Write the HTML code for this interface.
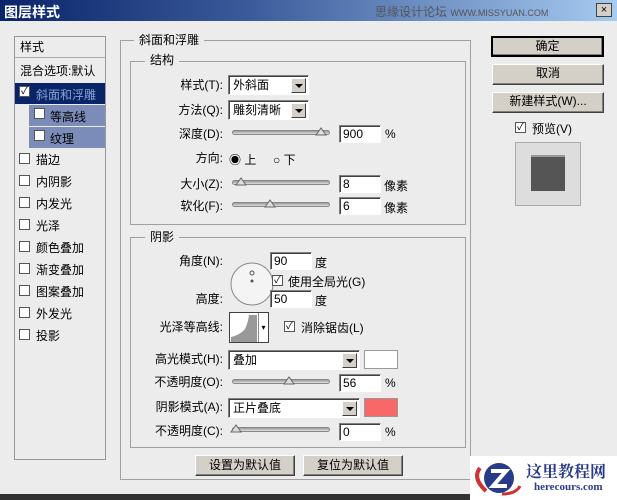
<!DOCTYPE html>
<html><head><meta charset="utf-8"><style>
*{margin:0;padding:0;box-sizing:border-box}
body{width:617px;height:500px;background:#ececec;font-family:"Liberation Sans","Noto Sans CJK SC",sans-serif;font-size:12px;color:#000;position:relative;overflow:hidden}
.a{position:absolute;white-space:nowrap}
.lbl{position:absolute;text-align:right;width:110px;line-height:14px}
.grp{position:absolute;border:1px solid #a0a0a0}
.gt{position:absolute;background:#ececec;padding:0 5px;line-height:14px}
.in{position:absolute;background:#fff;border:1px solid;border-color:#808080 #fff #fff #808080;box-shadow:inset 1px 1px 0 #404040;height:18px;line-height:16px;padding-left:3px}
.dd{position:absolute;background:#fff;border:1px solid;border-color:#808080 #fff #fff #808080;box-shadow:inset 1px 1px 0 #404040;height:20px;line-height:18px;padding-left:4px}
.dd i{position:absolute;right:2px;top:2px;width:15px;height:15px;background:#d4d0c8;border:1px solid;border-color:#fff #404040 #404040 #fff}
.dd i:after{content:"";position:absolute;left:3px;top:5px;border:4px solid transparent;border-top:4px solid #000;border-bottom:0}
.tr{position:absolute;height:5px;width:98px;background:linear-gradient(#999,#ddd);border-radius:3px;border:1px solid #888}
.th{position:absolute;width:12px;height:9px;top:-4px}
.cb{position:absolute;width:11px;height:11px;background:#fff;border:1px solid #555;font-size:10px;line-height:9px;text-align:center}
.btn{position:absolute;background:#d4d0c8;border:1px solid;border-color:#fff #404040 #404040 #fff;box-shadow:inset -1px -1px 0 #808080;text-align:center;line-height:17px}
</style></head><body>
<div class="a" style="left:0;top:0;width:617px;height:21px;background:linear-gradient(90deg,#0a246a,#3a5a9a 40%,#a6caf0);"></div>
<div class="a" style="left:4px;top:2px;color:#fff;font-weight:bold;font-size:14px">图层样式</div>
<div class="a" style="left:375px;top:3px;color:#555;font-size:12px">思缘设计论坛 <span style="font-size:9px">WWW.MISSYUAN.COM</span></div>
<div class="a" style="left:596px;top:3px;width:16px;height:14px;background:#d4d0c8;border:1px solid #404040;font-size:11px;text-align:center;line-height:12px">×</div>

<!-- left list -->
<div class="a" style="left:14px;top:36px;width:92px;height:424px;background:#ececec;border:1px solid #999"></div>
<div class="a" style="left:20px;top:38px">样式</div>
<div class="a" style="left:15px;top:57px;width:90px;border-top:1px solid #aaa"></div>
<div class="a" style="left:20px;top:62px">混合选项:默认</div>
<div class="a" style="left:15px;top:83px;width:90px;height:21px;background:#0a246a"></div>
<div class="cb" style="left:19px;top:86px">✓</div>
<div class="a" style="left:36px;top:86px;color:#8aa0d0">斜面和浮雕</div>
<div class="a" style="left:29px;top:105px;width:76px;height:21px;background:#7c8cb8"></div>
<div class="cb" style="left:34px;top:108px"></div><div class="a" style="left:50px;top:108px">等高线</div>
<div class="a" style="left:29px;top:127px;width:76px;height:21px;background:#7c8cb8"></div>
<div class="cb" style="left:34px;top:130px"></div><div class="a" style="left:50px;top:130px">纹理</div>
<div class="cb" style="left:19px;top:153px"></div><div class="a" style="left:36px;top:151px">描边</div>
<div class="cb" style="left:19px;top:175px"></div><div class="a" style="left:36px;top:173px">内阴影</div>
<div class="cb" style="left:19px;top:197px"></div><div class="a" style="left:36px;top:195px">内发光</div>
<div class="cb" style="left:19px;top:219px"></div><div class="a" style="left:36px;top:217px">光泽</div>
<div class="cb" style="left:19px;top:241px"></div><div class="a" style="left:36px;top:239px">颜色叠加</div>
<div class="cb" style="left:19px;top:263px"></div><div class="a" style="left:36px;top:261px">渐变叠加</div>
<div class="cb" style="left:19px;top:285px"></div><div class="a" style="left:36px;top:283px">图案叠加</div>
<div class="cb" style="left:19px;top:307px"></div><div class="a" style="left:36px;top:305px">外发光</div>
<div class="cb" style="left:19px;top:329px"></div><div class="a" style="left:36px;top:327px">投影</div>

<!-- groups -->
<div class="grp" style="left:120px;top:40px;width:351px;height:440px"></div>
<div class="gt" style="left:134px;top:33px">斜面和浮雕</div>
<div class="grp" style="left:130px;top:61px;width:336px;height:164px"></div>
<div class="gt" style="left:145px;top:53px">结构</div>
<div class="grp" style="left:130px;top:237px;width:336px;height:211px"></div>
<div class="gt" style="left:145px;top:230px">阴影</div>

<div class="lbl" style="left:113px;top:78px">样式(T):</div>
<div class="dd" style="left:228px;top:75px;width:81px">外斜面<i></i></div>
<div class="lbl" style="left:113px;top:103px">方法(Q):</div>
<div class="dd" style="left:228px;top:100px;width:81px">雕刻清晰<i></i></div>
<div class="lbl" style="left:113px;top:127px">深度(D):</div>
<div class="tr" style="left:232px;top:130px"><svg class="th" style="left:82px" viewBox="0 0 12 9"><path d="M1 8L6 1L11 8Z" fill="#ddd" stroke="#666"/></svg></div>
<div class="in" style="left:339px;top:125px;width:42px">900</div><div class="a" style="left:385px;top:127px">%</div>
<div class="lbl" style="left:113px;top:151px">方向:</div>
<div class="a" style="left:229px;top:151px">◉ 上 &nbsp;&nbsp;&nbsp;&nbsp;○ 下</div>
<div class="lbl" style="left:113px;top:177px">大小(Z):</div>
<div class="tr" style="left:232px;top:180px"><svg class="th" style="left:2px" viewBox="0 0 12 9"><path d="M1 8L6 1L11 8Z" fill="#ddd" stroke="#666"/></svg></div>
<div class="in" style="left:339px;top:175px;width:42px">8</div><div class="a" style="left:384px;top:177px">像素</div>
<div class="lbl" style="left:113px;top:199px">软化(F):</div>
<div class="tr" style="left:232px;top:202px"><svg class="th" style="left:31px" viewBox="0 0 12 9"><path d="M1 8L6 1L11 8Z" fill="#ddd" stroke="#666"/></svg></div>
<div class="in" style="left:339px;top:197px;width:42px">6</div><div class="a" style="left:384px;top:199px">像素</div>

<div class="lbl" style="left:113px;top:254px">角度(N):</div>
<svg class="a" style="left:230px;top:262px" width="44" height="44"><circle cx="22" cy="22" r="21" fill="#f4f4f4" stroke="#888"/><circle cx="22" cy="11" r="2" fill="none" stroke="#555"/><circle cx="22" cy="19" r="1.5" fill="#555"/></svg>
<div class="in" style="left:270px;top:252px;width:42px">90</div><div class="a" style="left:315px;top:254px">度</div>
<div class="cb" style="left:272px;top:275px">✓</div><div class="a" style="left:288px;top:273px">使用全局光(G)</div>
<div class="lbl" style="left:113px;top:292px">高度:</div>
<div class="in" style="left:270px;top:290px;width:42px">50</div><div class="a" style="left:315px;top:292px">度</div>
<div class="lbl" style="left:113px;top:320px">光泽等高线:</div>
<div class="a" style="left:229px;top:312px;width:40px;height:31px;background:#fff;border:1px solid #404040"><svg width="28" height="29" style="position:absolute;left:0;top:0"><path d="M1 29L1 24Q10 22 15 16Q18 10 19 2L27 2L27 29Z" fill="#999"/></svg><div style="position:absolute;right:0;top:0;width:10px;height:29px;border-left:1px solid #888;font-size:8px;line-height:29px;text-align:center">▾</div></div>
<div class="cb" style="left:284px;top:321px">✓</div><div class="a" style="left:301px;top:319px">消除锯齿(L)</div>
<div class="lbl" style="left:113px;top:352px">高光模式(H):</div>
<div class="dd" style="left:228px;top:350px;width:132px">叠加<i></i></div>
<div class="a" style="left:364px;top:350px;width:34px;height:19px;background:#fff;border:1px solid #999"></div>
<div class="lbl" style="left:113px;top:375px">不透明度(O):</div>
<div class="tr" style="left:232px;top:379px"><svg class="th" style="left:50px" viewBox="0 0 12 9"><path d="M1 8L6 1L11 8Z" fill="#ddd" stroke="#666"/></svg></div>
<div class="in" style="left:339px;top:374px;width:42px">56</div><div class="a" style="left:385px;top:376px">%</div>
<div class="lbl" style="left:113px;top:400px">阴影模式(A):</div>
<div class="dd" style="left:228px;top:398px;width:132px">正片叠底<i></i></div>
<div class="a" style="left:364px;top:398px;width:34px;height:19px;background:#f86868;border:1px solid #999"></div>
<div class="lbl" style="left:113px;top:424px">不透明度(C):</div>
<div class="tr" style="left:232px;top:427px"><svg class="th" style="left:-3px" viewBox="0 0 12 9"><path d="M1 8L6 1L11 8Z" fill="#ddd" stroke="#666"/></svg></div>
<div class="in" style="left:339px;top:423px;width:42px">0</div><div class="a" style="left:385px;top:425px">%</div>

<div class="btn" style="left:195px;top:455px;width:100px;height:21px;line-height:19px">设置为默认值</div>
<div class="btn" style="left:303px;top:455px;width:100px;height:21px;line-height:19px">复位为默认值</div>

<div class="btn" style="left:491px;top:36px;width:113px;height:21px;border:2px solid #000;line-height:17px">确定</div>
<div class="btn" style="left:492px;top:64px;width:112px;height:21px">取消</div>
<div class="btn" style="left:492px;top:92px;width:112px;height:21px">新建样式(W)...</div>
<div class="cb" style="left:515px;top:122px">✓</div><div class="a" style="left:532px;top:120px">预览(V)</div>
<div class="a" style="left:515px;top:142px;width:66px;height:64px;background:#ddd;border:1px solid #aaa"></div>
<div class="a" style="left:531px;top:155px;width:34px;height:36px;background:#555;border-top:2px solid #999"></div>

<div class="a" style="left:0;top:494px;width:617px;height:6px;background:#333"></div>
<div class="a" style="left:470px;top:456px;width:147px;height:44px;background:#fff"></div>
<svg class="a" style="left:472px;top:458px" width="50" height="40"><path d="M8 10Q0 20 14 33" stroke="#c33" stroke-width="4" fill="none"/><circle cx="27" cy="20" r="15" fill="#2a3a8a"/><path d="M19 13H34L21 28H35" stroke="#fff" stroke-width="4" fill="none"/><path d="M30 36Q44 36 48 28" stroke="#c33" stroke-width="3" fill="none"/></svg>
<div class="a" style="left:526px;top:459px;color:#2a3a8a;font-weight:bold;font-size:16px;font-family:'Noto Serif CJK SC',serif">这里教程网</div>
<div class="a" style="left:534px;top:481px;color:#2a3a8a;font-weight:bold;font-size:11px;font-family:'Liberation Serif',serif">herecours.com</div>
</body></html>
